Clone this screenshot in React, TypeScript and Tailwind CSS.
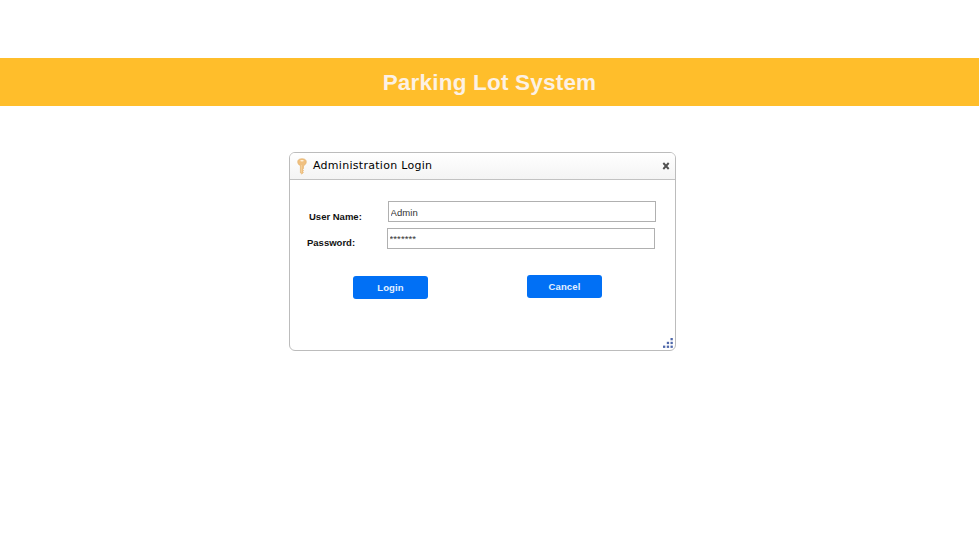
import { useState } from "react";

function KeyIcon() {
  return (
    <svg width="10" height="17" viewBox="0 0 10 17" className="shrink-0">
      <path
        d="M5 .7C2.400.7.7 1.700.7 3.800c0 1.900 1.100 3.200 2.700 3.900v7.100l1.400 1.300 1.600-1.500-.7-1.100.8-1-.8-1.100.8-1V7.700C8.200 7 9.300 5.700 9.300 3.800 9.300 1.700 7.600.7 5 .7Z"
        fill="#f0c080"
        stroke="#e2b06a"
        strokeWidth=".6"
      />
      <ellipse cx="5" cy="2.800" rx="1.800" ry=".8" fill="#fff3df" />
      <path d="M4.500 7v7.500" stroke="#f6d39c" strokeWidth=".8" />
    </svg>
  );
}

function CloseIcon() {
  return (
    <svg width="8" height="8" viewBox="0 0 8 8">
      <path d="M1.300 1l5.400 6M6.700 1L1.300 7" stroke="#505050" strokeWidth="1.900" />
    </svg>
  );
}

function ResizeGrip() {
  return (
    <svg width="10" height="10" viewBox="0 0 10 10" fill="#4f68aa">
      <rect x="7.500" y="0" width="2.300" height="2.300" />
      <rect x="3.800" y="3.800" width="2.300" height="2.300" />
      <rect x="7.500" y="3.800" width="2.300" height="2.300" />
      <rect x="0" y="7.600" width="2.300" height="2.300" />
      <rect x="3.800" y="7.600" width="2.300" height="2.300" />
      <rect x="7.500" y="7.600" width="2.300" height="2.300" />
    </svg>
  );
}

const inputClass =
  "h-[21px] w-[268px] border border-[#b0b0b0] bg-white pl-[1.5px] text-[9.5px] leading-none tracking-[0.1px] text-[#333] outline-none";
const buttonClass =
  "h-[23px] w-[75px] rounded-[3px] bg-[#0170f5] text-[9.5px] leading-none font-bold tracking-[0.15px] text-[#e4f0ff]";

export default function App() {
  const [userName, setUserName] = useState("Admin");
  const [password, setPassword] = useState("*******");

  return (
    <div className="flex h-[539px] w-full flex-col bg-white pt-[58px] font-['Liberation_Sans',Arial,sans-serif]">
      <header className="flex h-12 shrink-0 items-center justify-center bg-[#ffbe2b] pt-[2px]">
        <h1 className="text-[22.5px] leading-none font-bold tracking-[0.2px] whitespace-nowrap text-[#fcf1e4]">
          Parking Lot System
        </h1>
      </header>

      <main className="mt-[46px] ml-[289px] flex h-[199px] w-[387px] flex-col overflow-hidden rounded-[6px] border border-[#bcbcbc] bg-white">
        <div className="flex h-[27px] shrink-0 items-center border-b border-[#c2c2c2] bg-linear-to-b from-white to-[#f4f4f4] pr-[5px] pl-[7px]">
          <KeyIcon />
          <h2 className="ml-[6px] grow pb-[2px] font-['DejaVu_Sans',sans-serif] text-[11px] leading-none tracking-[0.28px] text-black">
            Administration Login
          </h2>
          <button aria-label="Close">
            <CloseIcon />
          </button>
        </div>

        <form className="flex grow flex-col pt-[21px]" onSubmit={(e) => e.preventDefault()}>
          <div className="flex h-[21px]">
            <label htmlFor="user" className="w-[98px] pt-[11px] pl-[19px] text-[9.5px] leading-none font-bold text-[#111]">
              User Name:
            </label>
            <input id="user" className={`${inputClass} pt-[2px]`} value={userName} onChange={(e) => setUserName(e.target.value)} />
          </div>
          <div className="mt-[6px] flex h-[22px]">
            <label htmlFor="pass" className="w-[97px] pt-[10px] pl-[17px] text-[9.5px] leading-none font-bold text-[#111]">
              Password:
            </label>
            <input id="pass" className={inputClass} value={password} onChange={(e) => setPassword(e.target.value)} />
          </div>
          <div className="mt-[25px] flex items-start pl-[63px]">
            <button className={`${buttonClass} mt-px`}>Login</button>
            <button className={`${buttonClass} ml-[99px]`}>Cancel</button>
          </div>
          <div className="mt-auto flex justify-end pr-[2px] pb-[2px]">
            <ResizeGrip />
          </div>
        </form>
      </main>
    </div>
  );
}
